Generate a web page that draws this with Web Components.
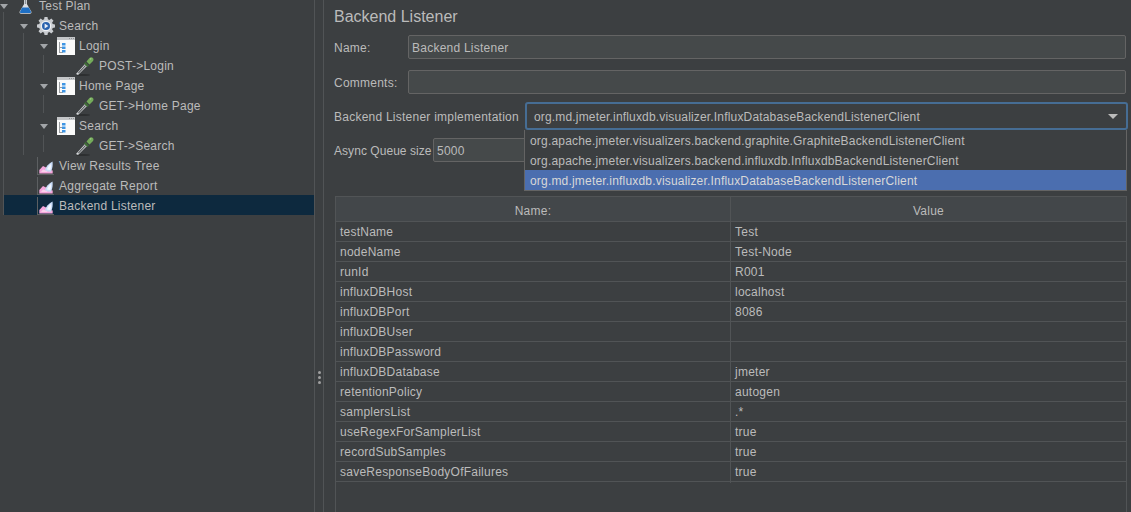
<!DOCTYPE html>
<html>
<head>
<meta charset="utf-8">
<title>Backend Listener</title>
<style>
  html, body { margin: 0; height: 100%; overflow: hidden; background: #3c3f41; }
  body { font: 12px "Liberation Sans", Arial, sans-serif; color: #bbbbbb; }
</style>
</head>
<body>
<jm-app>
  <tree-node slot="tree" icon="flask" arrow label="Test Plan"></tree-node>
  <tree-node slot="tree" icon="gear" arrow label="Search"></tree-node>
  <tree-node slot="tree" icon="frag" arrow label="Login"></tree-node>
  <tree-node slot="tree" icon="pipette" label="POST-&gt;Login"></tree-node>
  <tree-node slot="tree" icon="frag" arrow label="Home Page"></tree-node>
  <tree-node slot="tree" icon="pipette" label="GET-&gt;Home Page"></tree-node>
  <tree-node slot="tree" icon="frag" arrow label="Search"></tree-node>
  <tree-node slot="tree" icon="pipette" label="GET-&gt;Search"></tree-node>
  <tree-node slot="tree" icon="chart" label="View Results Tree"></tree-node>
  <tree-node slot="tree" icon="chart" label="Aggregate Report"></tree-node>
  <tree-node slot="tree" icon="chart" label="Backend Listener" selected></tree-node>

  <listener-form slot="main"></listener-form>
</jm-app>

<script>
class JmApp extends HTMLElement {
  constructor() {
    super();
    this.attachShadow({ mode: "open" });
    this.shadowRoot.innerHTML = `
      <style>
        :host { display: flex; height: 512px; overflow: hidden; }
        .tree { position: relative; width: 314px; flex: none; margin-top: -5px; }
        .guide { position: absolute; width: 1px; background: #515456; }
        .split { width: 8px; flex: none; border-left: 1px solid #515456; border-right: 1px solid #515456;
                 display: flex; flex-direction: column; align-items: center; justify-content: flex-end;
                 gap: 2px; padding-bottom: 128px; box-sizing: content-box; }
        .split i { width: 3px; height: 3px; background: #a0a0a0; border-radius: 50%; }
        .main { flex: 1; min-width: 0; }
      </style>
      <div class="tree">
        <div class="guide" style="left:3px;top:17px;height:203px"></div>
        <div class="guide" style="left:23px;top:38px;height:122px"></div>
        <div class="guide" style="left:43px;top:60px;height:18px"></div>
        <div class="guide" style="left:43px;top:100px;height:18px"></div>
        <div class="guide" style="left:43px;top:140px;height:17px"></div>
        <slot name="tree"></slot>
      </div>
      <div class="split"><i></i><i></i><i></i></div>
      <div class="main"><slot name="main"></slot></div>
    `;
  }
}

const ICONS = {
  flask: `<svg width="18" height="18" viewBox="2.500 0 18 18">
    <path d="M7 1h4v1h-.6v5l4.400 7.600c.5 1-.1 2.100-1.200 2.100H4.400c-1.100 0-1.700-1.100-1.200-2.100L7.600 7V2H7z" fill="#d9dde2"/>
    <path d="M5.600 10.500h6.800l2 4c.3.8-.1 1.600-.9 1.600H4.500c-.8 0-1.200-.8-.9-1.600z" fill="#1e6fc4"/>
    <path d="M8.500 2h1v5h-1z" fill="#8b9198"/></svg>`,
  gear: `<svg width="18" height="18" viewBox="0 0 18 18">
    <path d="M7.500 0h3l.4 2.300 1.500.6 1.900-1.400 2.200 2.200-1.400 1.900.6 1.500 2.300.4v3l-2.300.4-.6 1.500 1.400 1.900-2.200 2.200-1.900-1.400-1.500.6-.4 2.300h-3l-.4-2.300-1.500-.6-1.900 1.400-2.200-2.200 1.400-1.900-.6-1.500-2.300-.4v-3l2.300-.4.6-1.500-1.400-1.900 2.200-2.200 1.900 1.400 1.500-.6z" fill="#c9ccd0"/>
    <circle cx="9" cy="9" r="5.300" fill="#eef0f3"/>
    <circle cx="9" cy="9" r="4" fill="#2a62ae"/>
    <path d="M7.600 6.600l3.800 2.400-3.800 2.400z" fill="#e8eef8"/></svg>`,
  frag: `<svg width="18" height="18" viewBox="0 0 18 18">
    <rect width="18" height="18" fill="#fafafa"/>
    <rect width="18" height="3" fill="#c4c6c8"/>
    <path d="M12 1h1v1h-1zM14 1h1v1h-1zM16 1h1v1h-1z" fill="#8f9295"/>
    <path d="M2 5h1v10h3v1H2zM3 10h2v1H3z" fill="#9a9da0"/>
    <rect x="5" y="6" width="3.500" height="2.500" fill="#3f95e4"/>
    <rect x="5" y="9.500" width="3.500" height="2.500" fill="#3f95e4"/>
    <rect x="5" y="13" width="3.500" height="2.500" fill="#3f95e4"/></svg>`,
  pipette: `<svg width="20" height="20" viewBox="1 0 20 20">
    <ellipse cx="8" cy="19" rx="7" ry="1" fill="#2d2f30"/>
    <path d="M1 18L10 8l2 2-9 9z" fill="#d5d7d9"/>
    <path d="M3 16.800L10.300 9l.7.7L3.700 17.500z" fill="#55585a"/>
    <path d="M9 7.500l3.500 3.500 1.500-1.500-3.500-3.500z" fill="#3f6d35"/>
    <path d="M11.500 5.500l3-3.500c1-.9 2.600-.8 3.400.1.900.9.800 2.300-.1 3.200l-3.300 3.200z" fill="#74ac5a"/>
    <path d="M14.800 3l1-1 .8.8-1 1z" fill="#a9d392"/></svg>`,
  chart: `<svg width="18" height="18" viewBox="0 0 18 18">
    <path d="M0 0h1v17h16v1H0z" fill="#5d6062"/>
    <path d="M2.300 16.500V13L6 9 9 10.500l2 2 4.700 1v3z" fill="#f4a6dc"/>
    <path d="M4 15l2-2.500 3 1 2 1.500H5z" fill="#fad2ec"/>
    <path d="M8 13C9 9.500 11.500 6.500 15.500 4.500c.5 3.500 0 7-1.500 10-2 .5-4.500 0-6-1.500z" fill="#c9dcf7"/>
    <path d="M10 12.500c.5-2 2-4 4-5.500.3 2 .1 4-.6 6z" fill="#f2f7ff"/></svg>`
};

// [arrow x, icon x, label x] per kind of node, from the tree's indent
const SPOTS = {
  flask: [0, 19, 39],
  gear: [20, 37, 59],
  frag: [40, 57, 79],
  pipette: [0, 76, 99],
  chart: [0, 37, 59]
};

class TreeNode extends HTMLElement {
  constructor() {
    super();
    this.attachShadow({ mode: "open" });
  }

  connectedCallback() {
    const kind = this.getAttribute("icon");
    const [arrowX, iconX, labelX] = SPOTS[kind];
    const off = this.hasAttribute("selected") ? 4 : 0;
    this.shadowRoot.innerHTML = `
      <style>
        :host { display: block; position: relative; height: 20px; }
        :host([selected]) { background: #0d293e; margin-left: 4px; }
        .row { display: flex; align-items: center; box-sizing: border-box; height: 20px; padding-top: 2px; }
        .gutter { flex: none; box-sizing: border-box; display: flex; align-items: center;
                  width: ${iconX - off}px; padding-left: ${arrowX}px; }
        .arrow { width: 0; height: 0; border: 4px solid transparent; border-top: 5px solid #a2a5a8; border-bottom: 0; }
        .icon { flex: none; display: flex; width: ${labelX - iconX}px; }
        .label { letter-spacing: .24px; line-height: 12px; white-space: nowrap; }
      </style>
      <div class="row">
        <div class="gutter">${this.hasAttribute("arrow") ? '<span class="arrow"></span>' : ''}</div>
        <div class="icon">${ICONS[kind]}</div>
        <span class="label">${this.getAttribute("label")}</span>
      </div>
    `;
  }
}

class FormRow extends HTMLElement {
  constructor() {
    super();
    this.attachShadow({ mode: "open" });
    this.shadowRoot.innerHTML = `
      <style>
        :host { display: flex; align-items: center; }
        ::slotted(span) { letter-spacing: .24px; white-space: nowrap; padding-top: 2px; }
      </style>
      <slot name="label"></slot><slot></slot>
    `;
  }
}

class TextBox extends HTMLElement {
  constructor() {
    super();
    this.attachShadow({ mode: "open" });
    this.shadowRoot.innerHTML = `
      <style>
        :host { display: flex; align-items: center; box-sizing: border-box; height: 24px;
                background: #45494a; border: 1px solid #646464; border-radius: 2px;
                padding: 2px 0 0 3px; letter-spacing: .24px; flex: 1; min-width: 0; white-space: nowrap; }
      </style>
      <slot></slot>
    `;
  }
}

class ComboBox extends HTMLElement {
  constructor() {
    super();
    this.attachShadow({ mode: "open" });
    this.shadowRoot.innerHTML = `
      <style>
        :host { display: flex; align-items: center; justify-content: space-between; box-sizing: border-box;
                height: 28px; background: #3c3f41; border: 2px solid #466d94; border-radius: 3px;
                padding: 2px 8px 0 7px; letter-spacing: .17px; white-space: nowrap; flex: 1; min-width: 0; }
        .arrow { width: 0; height: 0; margin-top: -2px; border: 5px solid transparent; border-top: 5px solid #bbbbbb; border-bottom: 0; }
      </style>
      <slot></slot><span class="arrow"></span>
    `;
  }
}

class ComboPopup extends HTMLElement {
  constructor() {
    super();
    this.attachShadow({ mode: "open" });
    this.shadowRoot.innerHTML = `
      <style>
        :host { display: block; position: absolute; left: 200px; right: 4px; top: 130px; z-index: 2;
                background: #3c3f41; border: 1px solid #646464; border-top: 0; }
        ::slotted(div) { height: 20px; line-height: 22px; padding-left: 5px; letter-spacing: .19px; white-space: nowrap; }
        ::slotted(.on) { background: #4b6eaf; color: #d8d8d8; }
      </style>
      <slot></slot>
    `;
  }
}

class ParamTable extends HTMLElement {
  constructor() {
    super();
    this.attachShadow({ mode: "open" });
  }

  connectedCallback() {
    const rows = JSON.parse(this.getAttribute("rows"));
    this.shadowRoot.innerHTML = `
      <style>
        :host { display: block; flex: 1; border-left: 1px solid #515456; border-right: 1px solid #515456; }
        .head { display: grid; grid-template-columns: 394px 1fr; height: 26px; background: #43474a;
                border-top: 1px solid #515456; border-bottom: 1px solid #515456; box-sizing: border-box;
                text-align: center; line-height: 28px; letter-spacing: .24px; }
        .head div + div { border-left: 1px solid #515456; }
        .row { display: grid; grid-template-columns: 394px 1fr; height: 20px; box-sizing: border-box;
               border-bottom: 1px solid #515456; line-height: 21px; letter-spacing: .24px; }
        .row div { padding-left: 4px; white-space: nowrap; }
        .row div + div { border-left: 1px solid #515456; }
      </style>
      <div class="head"><div>Name:</div><div>Value</div></div>
      ${rows.map(r => `<div class="row"><div>${r[0]}</div><div>${r[1]}</div></div>`).join("")}
    `;
  }
}

class ListenerForm extends HTMLElement {
  constructor() {
    super();
    this.attachShadow({ mode: "open" });
    const rows = [
      ["testName", "Test"], ["nodeName", "Test-Node"], ["runId", "R001"],
      ["influxDBHost", "localhost"], ["influxDBPort", "8086"], ["influxDBUser", ""],
      ["influxDBPassword", ""], ["influxDBDatabase", "jmeter"], ["retentionPolicy", "autogen"],
      ["samplersList", ".*"], ["useRegexForSamplerList", "true"], ["recordSubSamples", "true"],
      ["saveResponseBodyOfFailures", "true"]
    ];
    this.shadowRoot.innerHTML = `
      <style>
        :host { display: flex; flex-direction: column; position: relative; height: 512px;
                box-sizing: border-box; padding: 0 5px 0 10px; }
        h1 { margin: 0; height: 35px; font: 16px/34px "Liberation Sans", Arial, sans-serif; color: #bbbbbb; }
        .name { margin-bottom: 11px; }
        .name span { width: 74px; }
        .impl { margin: 8px -2px 0 0; }
        .impl span { width: 191px; }
        .async { margin-top: 8px; }
        .async span { width: 99px; letter-spacing: .05px; }
        param-table { margin: 34px -1px 0 1px; }
      </style>
      <h1>Backend Listener</h1>
      <form-row class="name"><span slot="label">Name:</span><text-box>Backend Listener</text-box></form-row>
      <form-row class="name" style="margin-bottom:0"><span slot="label">Comments:</span><text-box></text-box></form-row>
      <form-row class="impl"><span slot="label">Backend Listener implementation</span><combo-box>org.md.jmeter.influxdb.visualizer.InfluxDatabaseBackendListenerClient</combo-box></form-row>
      <form-row class="async"><span slot="label">Async Queue size</span><text-box>5000</text-box></form-row>
      <combo-popup>
        <div>org.apache.jmeter.visualizers.backend.graphite.GraphiteBackendListenerClient</div>
        <div>org.apache.jmeter.visualizers.backend.influxdb.InfluxdbBackendListenerClient</div>
        <div class="on">org.md.jmeter.influxdb.visualizer.InfluxDatabaseBackendListenerClient</div>
      </combo-popup>
      <param-table rows='${JSON.stringify(rows)}'></param-table>
    `;
  }
}

customElements.define("jm-app", JmApp);
customElements.define("tree-node", TreeNode);
customElements.define("form-row", FormRow);
customElements.define("text-box", TextBox);
customElements.define("combo-box", ComboBox);
customElements.define("combo-popup", ComboPopup);
customElements.define("param-table", ParamTable);
customElements.define("listener-form", ListenerForm);
</script>
</body>
</html>
